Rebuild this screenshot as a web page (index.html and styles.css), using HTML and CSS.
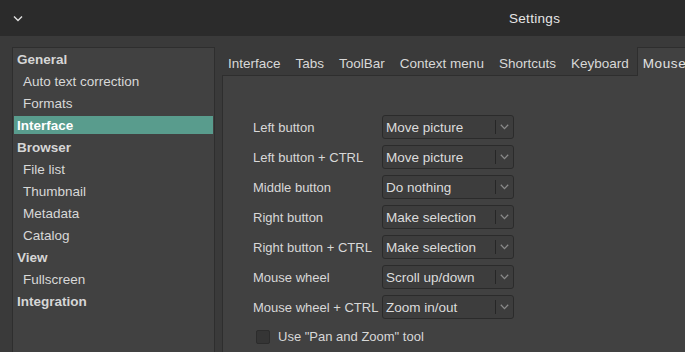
FILE: index.html
```html
<!DOCTYPE html>
<html>
<head>
<meta charset="utf-8">
<link rel="stylesheet" href="styles.css">
</head>
<body>
<div class="window">
  <header class="titlebar">
    <svg class="menu-chevron" width="10" height="7" viewBox="0 0 10 7"><path d="M1 1.5 L5 5.5 L9 1.5" fill="none" stroke="#e0e0e0" stroke-width="1.4"/></svg>
    <div class="title">Settings</div>
  </header>
  <main class="main">
    <nav class="sidebar">
      <div class="item cat">General</div>
      <div class="item sub">Auto text correction</div>
      <div class="item sub">Formats</div>
      <div class="item cat selected">Interface</div>
      <div class="item cat">Browser</div>
      <div class="item sub">File list</div>
      <div class="item sub">Thumbnail</div>
      <div class="item sub">Metadata</div>
      <div class="item sub">Catalog</div>
      <div class="item cat">View</div>
      <div class="item sub">Fullscreen</div>
      <div class="item cat">Integration</div>
    </nav>
    <section class="tabwidget">
      <div class="tabbar">
        <div class="tab first">Interface</div>
        <div class="tab">Tabs</div>
        <div class="tab">ToolBar</div>
        <div class="tab">Context menu</div>
        <div class="tab">Shortcuts</div>
        <div class="tab">Keyboard</div>
        <div class="tab active">Mouse</div>
      </div>
      <div class="pane">
        <div class="form">
          <div class="label">Left button</div>
          <div class="combo"><span class="value">Move picture</span><span class="arrow"><svg width="9" height="6" viewBox="0 0 9 6"><path d="M0.8 0.8 L4.5 4.6 L8.2 0.8" fill="none" stroke="#8a8a8a" stroke-width="1.3"/></svg></span></div>
          <div class="label">Left button + CTRL</div>
          <div class="combo"><span class="value">Move picture</span><span class="arrow"><svg width="9" height="6" viewBox="0 0 9 6"><path d="M0.8 0.8 L4.5 4.6 L8.2 0.8" fill="none" stroke="#8a8a8a" stroke-width="1.3"/></svg></span></div>
          <div class="label">Middle button</div>
          <div class="combo"><span class="value">Do nothing</span><span class="arrow"><svg width="9" height="6" viewBox="0 0 9 6"><path d="M0.8 0.8 L4.5 4.6 L8.2 0.8" fill="none" stroke="#8a8a8a" stroke-width="1.3"/></svg></span></div>
          <div class="label">Right button</div>
          <div class="combo"><span class="value">Make selection</span><span class="arrow"><svg width="9" height="6" viewBox="0 0 9 6"><path d="M0.8 0.8 L4.5 4.6 L8.2 0.8" fill="none" stroke="#8a8a8a" stroke-width="1.3"/></svg></span></div>
          <div class="label">Right button + CTRL</div>
          <div class="combo"><span class="value">Make selection</span><span class="arrow"><svg width="9" height="6" viewBox="0 0 9 6"><path d="M0.8 0.8 L4.5 4.6 L8.2 0.8" fill="none" stroke="#8a8a8a" stroke-width="1.3"/></svg></span></div>
          <div class="label">Mouse wheel</div>
          <div class="combo"><span class="value">Scroll up/down</span><span class="arrow"><svg width="9" height="6" viewBox="0 0 9 6"><path d="M0.8 0.8 L4.5 4.6 L8.2 0.8" fill="none" stroke="#8a8a8a" stroke-width="1.3"/></svg></span></div>
          <div class="label">Mouse wheel + CTRL</div>
          <div class="combo"><span class="value">Zoom in/out</span><span class="arrow"><svg width="9" height="6" viewBox="0 0 9 6"><path d="M0.8 0.8 L4.5 4.6 L8.2 0.8" fill="none" stroke="#8a8a8a" stroke-width="1.3"/></svg></span></div>
          <label class="check-row"><span class="checkbox"></span><span>Use "Pan and Zoom" tool</span></label>
        </div>
      </div>
    </section>
  </main>
</div>
</body>
</html>
```
FILE: styles.css
```css
html, body {
  margin: 0;
  padding: 0;
}
body {
  width: 685px;
  height: 352px;
  overflow: hidden;
  background: #3a3a3a;
  font-family: "Liberation Sans", Arial, sans-serif;
  font-size: 13.5px;
  color: #dcdcdc;
}
.window {
  display: flex;
  flex-direction: column;
  height: 352px;
}
.titlebar {
  height: 36px;
  flex: none;
  background: #2b2b2b;
  display: flex;
  align-items: center;
}
.menu-chevron {
  margin-left: 13px;
}
.title {
  margin-left: 486px;
  color: #e6e6e6;
  font-size: 13.5px;
  letter-spacing: 0.3px;
}
.main {
  flex: 1;
  display: flex;
  padding: 11px 0 0 12px;
  min-height: 0;
}
.sidebar {
  width: 201px;
  flex: none;
  background: #414141;
  border: 1px solid #2e2e2e;
  border-bottom: none;
  padding-top: 2px;
}
.item {
  height: 18px;
  margin: 0 1px 4px 1px;
  display: flex;
  align-items: center;
  white-space: nowrap;
}
.cat {
  font-weight: bold;
  padding-left: 3px;
  color: #d6d6d6;
}
.sub {
  padding-left: 9px;
  color: #d8d8d8;
}
.selected {
  background: #599c8d;
  color: #ffffff;
}
.tabwidget {
  flex: 1;
  display: flex;
  flex-direction: column;
  margin-left: 7px;
  min-width: 0;
}
.tabbar {
  height: 28px;
  flex: none;
  display: flex;
  align-items: stretch;
  border-bottom: 1px solid #2e2e2e;
  white-space: nowrap;
}
.tab {
  padding: 3px 7px 0 6px;
  border: 1px solid transparent;
  border-bottom: none;
  display: flex;
  align-items: center;
  color: #d8d8d8;
  margin-bottom: -1px;
}
.tab.first {
  padding-left: 5px;
}
.tab.active {
  padding-left: 5px;
  background: #414141;
  border-color: #2e2e2e;
  color: #e2e2e2;
  letter-spacing: 0.6px;
}
.pane {
  flex: 1;
  background: #414141;
  border-left: 1px solid #2e2e2e;
  padding: 39px 0 0 30px;
}
.form {
  display: grid;
  grid-template-columns: 129px 132px;
  row-gap: 6px;
  align-items: center;
}
.label {
  white-space: nowrap;
  color: #d8d8d8;
  font-size: 13px;
}
.combo {
  height: 22px;
  border: 1px solid #2b2b2b;
  border-radius: 3px;
  background: #3d3d3d;
  display: flex;
  align-items: center;
  color: #dcdcdc;
}
.value {
  flex: 1;
  padding-left: 3px;
  white-space: nowrap;
}
.arrow {
  width: 17px;
  height: 14px;
  border-left: 1px solid #262626;
  display: flex;
  align-items: center;
  justify-content: center;
}
.check-row {
  grid-column: 1 / span 2;
  display: flex;
  align-items: center;
  gap: 8px;
  padding-left: 3px;
  margin-top: 4px;
  color: #d8d8d8;
  font-size: 13px;
}
.checkbox {
  width: 12px;
  height: 12px;
  border: 1px solid #2c2c2c;
  border-radius: 2px;
  background: #353535;
}
```
